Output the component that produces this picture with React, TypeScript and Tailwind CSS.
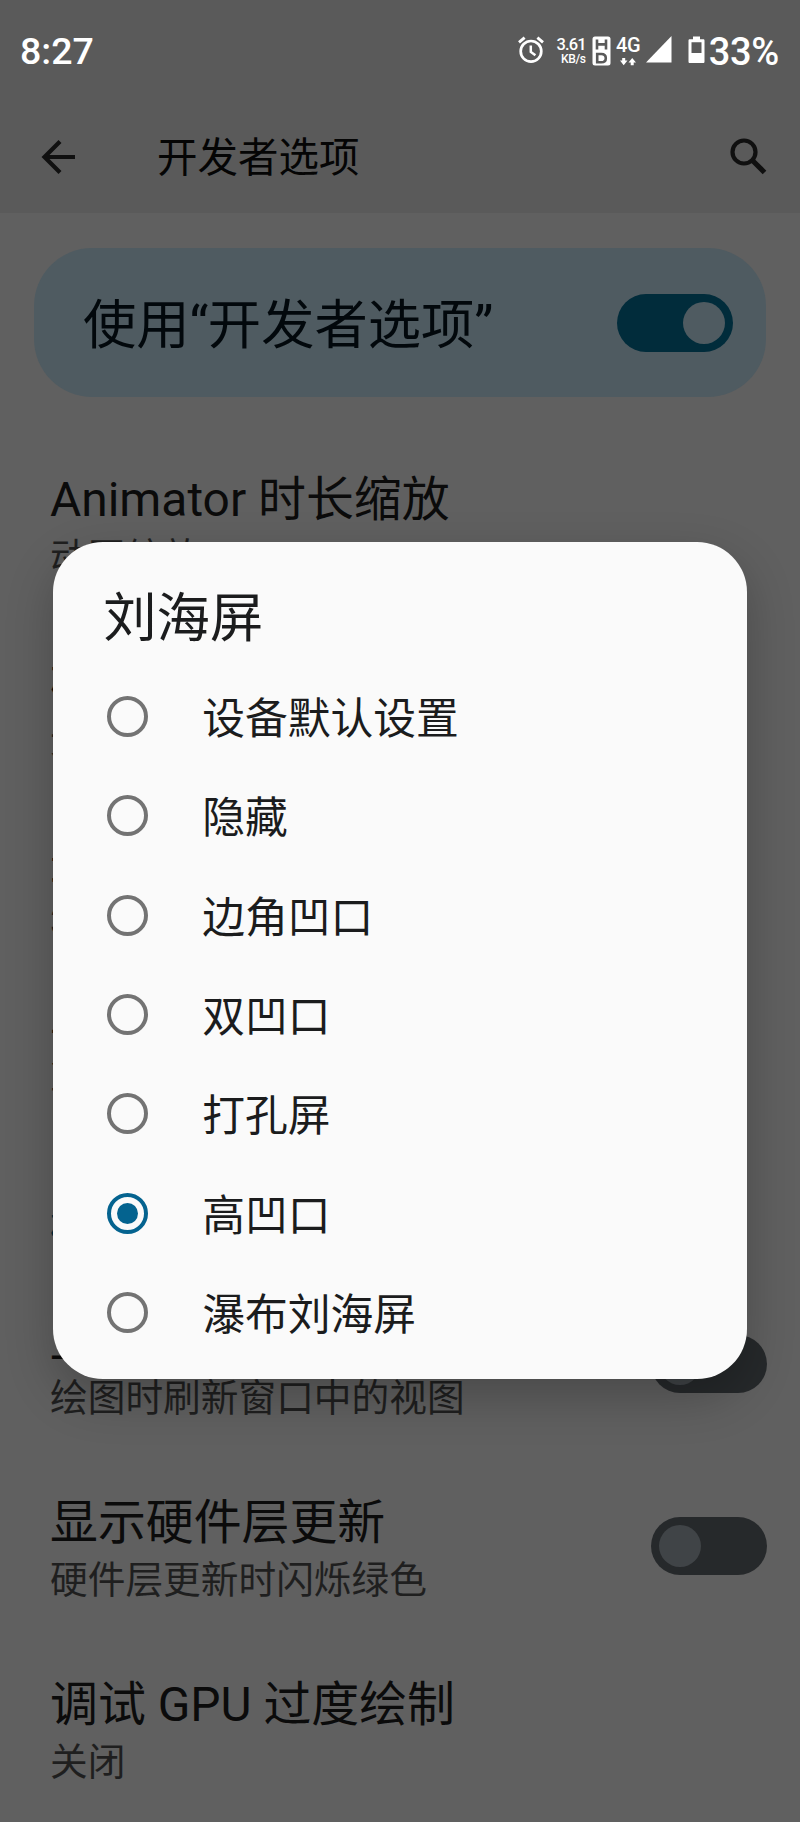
import React from 'react';

function Toggle({ on = false }: { on?: boolean }) {
  return on ? (
    <div className="flex h-[58px] w-[116px] shrink-0 items-center justify-end rounded-full bg-[#012c3b] px-2">
      <div className="h-[42px] w-[42px] rounded-full bg-[#4f5b61]" />
    </div>
  ) : (
    <div className="flex h-[58px] w-[116px] shrink-0 items-center rounded-full bg-[#26292b] px-2">
      <div className="h-[42px] w-[42px] rounded-full bg-[#404447]" />
    </div>
  );
}

type Row = { title: string; summary: string; toggle?: boolean };

function SettingRow({ title, summary, toggle }: Row) {
  return (
    <div className="flex h-[182px] items-center justify-between pr-[33px] pl-[50px]">
      <div className="pt-1">
        <div className="text-[47.9px] leading-[64px] whitespace-nowrap text-[#0b0b0b]">{title}</div>
        <div className="text-[37.7px] leading-[50px] whitespace-nowrap text-[#1f1f1f]">{summary}</div>
      </div>
      {toggle && <Toggle />}
    </div>
  );
}

const upperRows: Row[] = [
  { title: 'Animator 时长缩放', summary: '动画缩放 1x' },
  { title: '模拟辅助显示设备', summary: '无' },
  { title: '最小宽度', summary: '392 dp' },
  { title: '刘海屏', summary: '高凹口' },
];

const lowerRows: Row[] = [
  { title: '显示视图更新', summary: '绘图时刷新窗口中的视图', toggle: true },
  { title: '显示硬件层更新', summary: '硬件层更新时闪烁绿色', toggle: true },
  { title: '调试 GPU 过度绘制', summary: '关闭' },
];

const options = ['设备默认设置', '隐藏', '边角凹口', '双凹口', '打孔屏', '高凹口', '瀑布刘海屏'];
const selected = '高凹口';

function StatusBar() {
  return (
    <div className="flex h-[102px] items-center justify-between pr-[21px] pl-5 text-white">
      <div className="pt-[2px] text-[37.5px] leading-none font-medium">8:27</div>
      <div className="flex items-center">
        <svg width="28" height="28" viewBox="0 0 28 28" fill="none" stroke="white" className="mt-[-2px] mr-[12px]">
          <circle cx="14" cy="15.3" r="10.3" strokeWidth="2.7" />
          <path d="M13.8 9.5v6.4l4.6 3.4" strokeWidth="2.5" />
          <path d="M2 6.4 7.6 1.7M26 6.4 20.4 1.7" strokeWidth="2.9" />
        </svg>
        <div className="mr-[6px] flex w-[29px] flex-col items-end font-medium">
          <span className="text-[16.5px] leading-[15px] tracking-[-0.9px]">3.61</span>
          <span className="text-[12px] leading-[14px] tracking-[-0.3px]">KB/s</span>
        </div>
        <svg width="19" height="30" viewBox="0 0 19 30" className="mr-[5px]">
          <rect x="0.5" y="0.5" width="18" height="29" rx="2.5" fill="white" />
          <path
            d="M5 3.5v10M14 3.5v10M5 8.4h9M5.2 18v8.3h4.1c3 0 4.5-1.6 4.5-4.1s-1.5-4.2-4.5-4.2z"
            fill="none"
            stroke="#5a5a5a"
            strokeWidth="2.6"
          />
        </svg>
        <div className="mr-[5px] flex w-[25px] flex-col items-center">
          <span className="text-[20px] leading-[19px] font-medium tracking-[-0.4px]">4G</span>
          <svg width="16" height="9" viewBox="0 0 16 9" fill="white" className="mt-[2px]">
            <path d="M2.200 1h3v2.600h2.300L3.700 8.300 0 3.600h2.200zM10.700 8.300h3V5.500h2.300L12.200 1 8.500 5.500h2.200z" />
          </svg>
        </div>
        <svg width="26" height="27" viewBox="0 0 26 27" className="mt-[-3px] mr-[16px]">
          <path d="M25.5 0v26.5H0z" fill="white" />
        </svg>
        <svg width="17" height="28" viewBox="0 0 17 28" className="mt-[-2px] mr-[4px]">
          <path
            d="M5 0.5h7v2.7h3.2c.8 0 1.3.5 1.3 1.3v21.2c0 .8-.5 1.3-1.3 1.3H1.8c-.8 0-1.3-.5-1.3-1.3V4.500c0-.8.5-1.3 1.3-1.3H5zM3.500 6.200v10.800h10V6.200z"
            fill="white"
            fillRule="evenodd"
          />
        </svg>
        <div className="pt-[2px] text-[38px] leading-none font-medium tracking-[-0.3px]">33%</div>
      </div>
    </div>
  );
}

export default function App() {
  return (
    <div
      lang="zh-CN"
      className="relative h-[1822px] w-[800px] overflow-hidden bg-[#606060] font-['Roboto','Noto_Sans_CJK_SC',sans-serif]"
    >
      <header className="h-[213px] bg-[#5a5a5a]">
        <StatusBar />
        <div className="flex h-[110px] items-center pr-[33px] pl-[41px]">
          <svg width="35" height="34" viewBox="0 0 35 34" fill="none" stroke="#101010" strokeWidth="4.2">
            <path d="M34 17H4M19 1.500 3.500 17 19 32.500" />
          </svg>
          <h1 className="ml-[81px] flex-1 pt-[1px] text-[40.5px] leading-[60px] text-[#050505]">开发者选项</h1>
          <svg width="37" height="37" viewBox="0 0 37 37" fill="none" stroke="#101010" className="mt-[-2px]">
            <circle cx="14" cy="14" r="11.500" strokeWidth="4.2" />
            <path d="M22.500 22.500 34.500 34.500" strokeWidth="5.2" />
          </svg>
        </div>
      </header>

      <div className="mx-[34px] mt-[35px] flex h-[149px] items-center justify-between rounded-[58px] bg-[#4f5b61] pr-[33px] pl-[49px]">
        <div className="pt-[7px] text-[53.3px] leading-[80px] whitespace-nowrap text-[#02080c]">
          使用<span className="tracking-[-0.6px]">“</span>开发者选项”
        </div>
        <Toggle on />
      </div>

      <main className="mt-[35px]">
        {upperRows.map((row) => (
          <SettingRow key={row.title} {...row} />
        ))}
        <div className="flex h-[113px] items-center pt-[30px] pl-[50px] text-[37.7px] leading-[50px] text-[#012c3b]">
          硬件加速渲染
        </div>
        {lowerRows.map((row) => (
          <SettingRow key={row.title} {...row} />
        ))}
      </main>

      <div
        role="dialog"
        className="absolute top-[542px] left-[53.3px] h-[836.5px] w-[693.3px] rounded-[50px] bg-[#fafafa] text-[#1b1c1d] shadow-[0_18px_48px_rgba(0,0,0,0.24)]"
      >
        <h2 className="flex h-[125px] items-center pt-[29px] pl-[50px] text-[53.3px] leading-[80px]">刘海屏</h2>
        <div>
          {options.map((option) => (
            <div key={option} className="flex h-[99.33px] items-center pl-[54px]">
              {option === selected ? (
                <div className="flex h-[41px] w-[41px] items-center justify-center rounded-full border-4 border-[#04638f]">
                  <div className="h-[21px] w-[21px] rounded-full bg-[#04638f]" />
                </div>
              ) : (
                <div className="h-[41px] w-[41px] rounded-full border-4 border-[#737373]" />
              )}
              <span className="ml-[54px] pt-[5px] text-[42.75px] leading-[60px]">{option}</span>
            </div>
          ))}
        </div>
      </div>
    </div>
  );
}
